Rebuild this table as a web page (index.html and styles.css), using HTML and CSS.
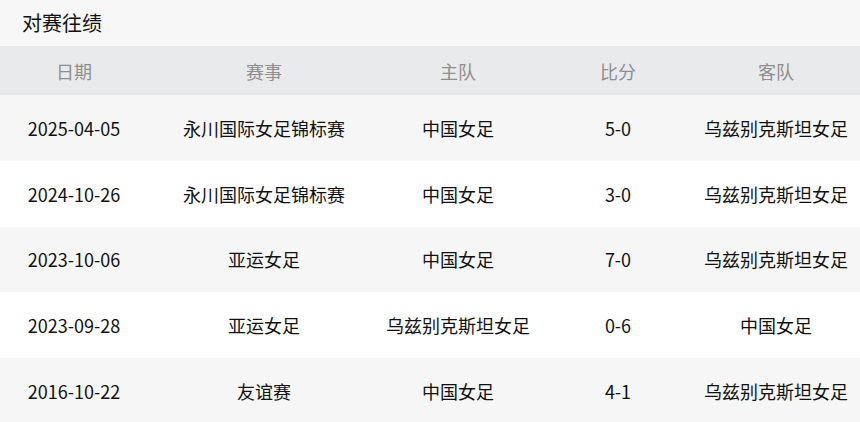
FILE: index.html
```html
<!DOCTYPE html>
<html lang="zh-CN">
<head>
<meta charset="utf-8">
<title>对赛往绩</title>
<link rel="stylesheet" href="styles.css">
</head>
<body>
<div class="panel">
  <div class="title">对赛往绩</div>
  <div class="row head">
    <div>日期</div><div>赛事</div><div>主队</div><div>比分</div><div>客队</div>
  </div>
  <div class="row odd">
    <div>2025-04-05</div><div>永川国际女足锦标赛</div><div>中国女足</div><div>5-0</div><div>乌兹别克斯坦女足</div>
  </div>
  <div class="row even">
    <div>2024-10-26</div><div>永川国际女足锦标赛</div><div>中国女足</div><div>3-0</div><div>乌兹别克斯坦女足</div>
  </div>
  <div class="row odd">
    <div>2023-10-06</div><div>亚运女足</div><div>中国女足</div><div>7-0</div><div>乌兹别克斯坦女足</div>
  </div>
  <div class="row even">
    <div>2023-09-28</div><div>亚运女足</div><div>乌兹别克斯坦女足</div><div>0-6</div><div>中国女足</div>
  </div>
  <div class="row odd">
    <div>2016-10-22</div><div>友谊赛</div><div>中国女足</div><div>4-1</div><div>乌兹别克斯坦女足</div>
  </div>
</div>
</body>
</html>
```
FILE: styles.css
```css
html, body {
  margin: 0;
  padding: 0;
  background: #ffffff;
}
body {
  font-family: "Noto Sans CJK SC", "Noto Sans", sans-serif;
  color: #111111;
}
.panel {
  width: 860px;
}
.title {
  height: 46px;
  line-height: 46px;
  padding-left: 22px;
  font-size: 20px;
  background: #f7f7f7;
  color: #111111;
}
.row {
  display: grid;
  grid-template-columns: 148px 232px 156px 164px 152px 8px;
  align-items: center;
  font-size: 18px;
  height: 65.75px;
}
.row > div {
  text-align: center;
  white-space: nowrap;
}
.head {
  height: 49px;
  background: #e9eaec;
  color: #8e8e8e;
}
.odd {
  background: #f6f6f6;
}
.even {
  background: #ffffff;
}
```
